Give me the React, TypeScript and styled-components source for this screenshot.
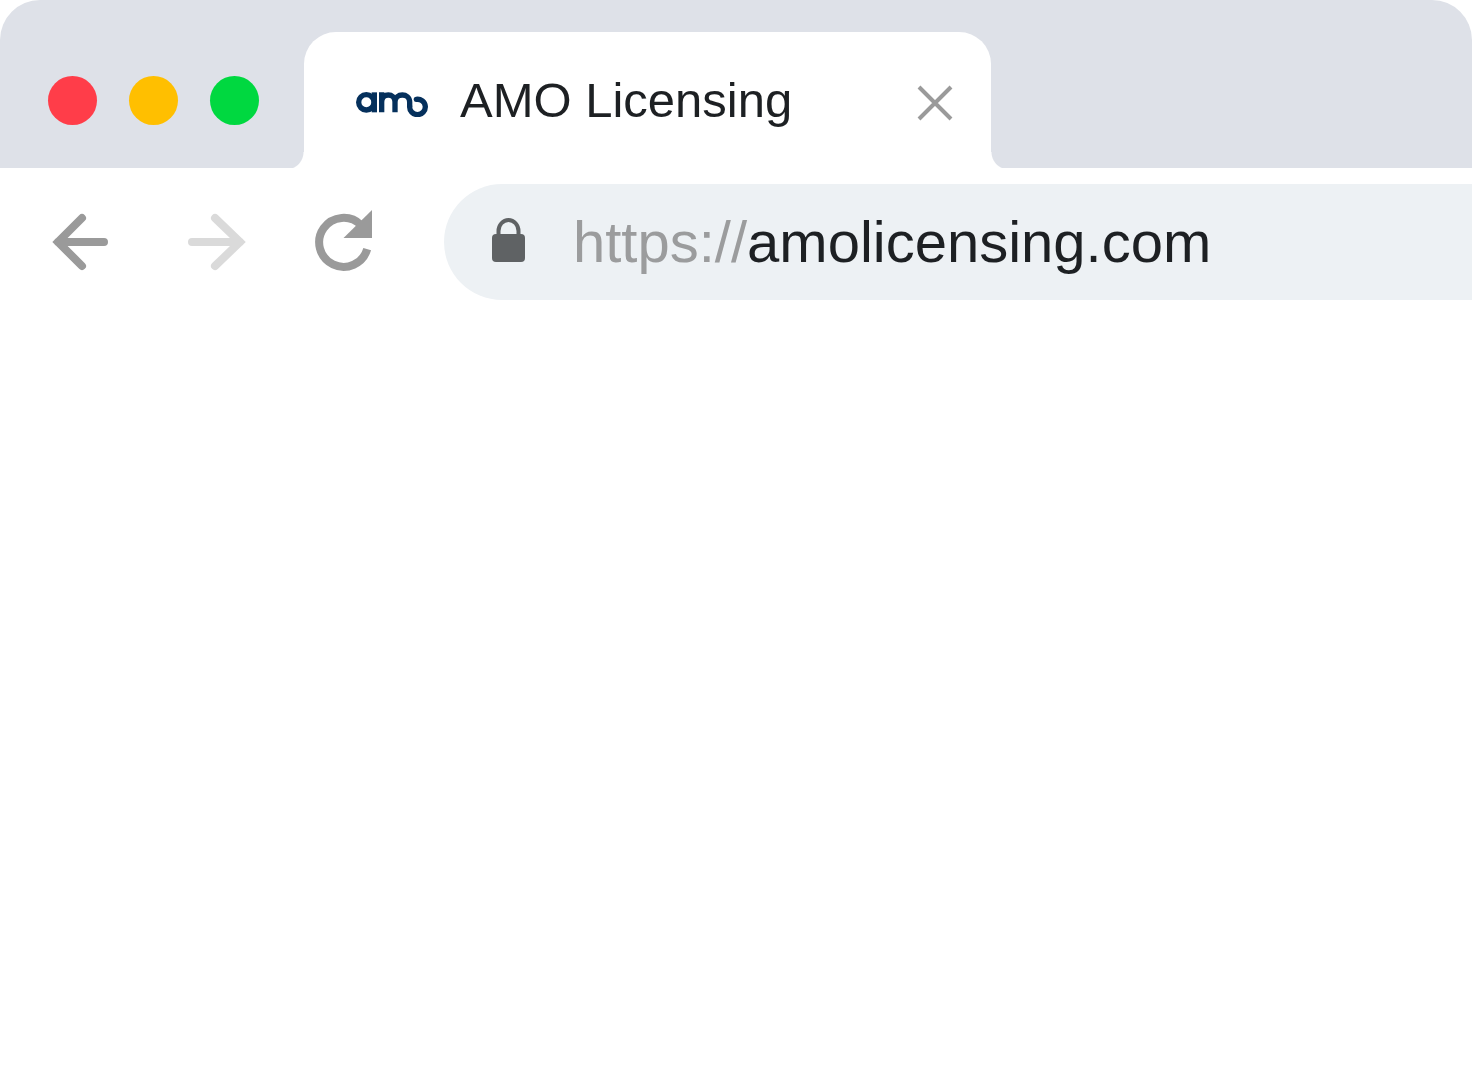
import React, { useState } from "react";
import styled, { createGlobalStyle } from "styled-components";

const colors = {
  strip: "#dee1e8",
  surface: "#ffffff",
  field: "#edf1f4",
  ink: "#1d2023",
  muted: "#9b9c9d",
  icon: "#9a9a9a",
  iconDisabled: "#dadada",
  lock: "#5f6264",
  brand: "#05305c",
};

const GlobalStyle = createGlobalStyle`
  *, *::before, *::after { box-sizing: border-box; }
  body {
    margin: 0;
    background: ${colors.surface};
    font-family: "Liberation Sans", Arial, sans-serif;
    color: ${colors.ink};
  }
`;

const BrowserWindow = styled.div`
  display: flex;
  flex-direction: column;
  min-height: 100vh;
  overflow: hidden;
  background: ${colors.surface};
`;

const TabStrip = styled.header`
  display: flex;
  align-items: flex-end;
  gap: 45px;
  padding: 32px 48px 0;
  background: ${colors.strip};
  border-radius: 40px 40px 0 0;
`;

const WindowControls = styled.div`
  display: flex;
  align-items: center;
  gap: 32px;
  height: 136px;
`;

const PlainButton = styled.button`
  display: flex;
  align-items: center;
  justify-content: center;
  flex: none;
  padding: 0;
  border: 0;
  background: none;
  cursor: pointer;

  &:disabled {
    cursor: default;
  }
`;

const WindowDot = styled(PlainButton)<{ $color: string }>`
  width: 49px;
  height: 49px;
  border-radius: 50%;
  background: ${({ $color }) => $color};
`;

const Tab = styled.div`
  position: relative;
  display: flex;
  align-items: center;
  gap: 32px;
  width: 687px;
  height: 136px;
  padding: 0 32px 0 52px;
  background: ${colors.surface};
  border-radius: 32px 32px 0 0;

  &::before,
  &::after {
    content: "";
    position: absolute;
    bottom: 0;
    width: 18px;
    height: 16px;
  }

  &::before {
    right: 100%;
    background: radial-gradient(circle at 0 0, transparent 17px, ${colors.surface} 18px);
  }

  &::after {
    left: 100%;
    background: radial-gradient(circle at 100% 0, transparent 17px, ${colors.surface} 18px);
  }
`;

const TabTitle = styled.span`
  flex: 1;
  font-size: 49px;
  line-height: 56px;
  white-space: nowrap;
`;

const CloseButton = styled(PlainButton)`
  width: 48px;
  height: 48px;
  margin-top: 6px;
`;

const Toolbar = styled.nav`
  display: flex;
  align-items: center;
  gap: 68px;
  padding: 16px 0 16px 48px;
`;

const ToolButton = styled(PlainButton)`
  width: 64px;
  height: 64px;

  svg {
    overflow: visible;
  }
`;

const AddressBar = styled.label`
  display: flex;
  align-items: center;
  flex: 1;
  min-width: 0;
  height: 116px;
  padding-left: 48px;
  background: ${colors.field};
  border-radius: 58px 0 0 58px;
  font-size: 58px;
  line-height: 68px;
`;

const Scheme = styled.span`
  padding-left: 48px;
  color: ${colors.muted};
`;

const AddressInput = styled.input`
  flex: 1;
  min-width: 0;
  height: 68px;
  padding: 0;
  border: 0;
  outline: 0;
  background: none;
  color: inherit;
  font: inherit;
`;

const Page = styled.main`
  flex: 1;
`;

const BrandLogo = () => (
  <svg width="72" height="33" viewBox="0 -24 216 99" fill="none" stroke={colors.brand} strokeWidth="16" aria-hidden="true">
    <circle cx="31" cy="31" r="23" />
    <path d="M55 1V61" />
    <path d="M77 61V1M77 30C77 2 117 2 117 30V61M117 30C117 2 161 2 161 30V44" />
    <path d="M161 43A23.500 23 0 1 0 181 22" strokeLinecap="round" />
  </svg>
);

const CloseIcon = () => (
  <svg width="36" height="36" viewBox="0 0 36 36" stroke={colors.icon} strokeWidth="4" aria-hidden="true">
    <path d="M2 2L34 34M34 2L2 34" />
  </svg>
);

const BackIcon = () => (
  <svg width="64" height="64" viewBox="0 0 64 64" fill="none" stroke={colors.icon} strokeWidth="8" strokeLinecap="round" aria-hidden="true">
    <path d="M56 32H10M34 8L10 32L34 56" />
  </svg>
);

const ForwardIcon = () => (
  <svg width="64" height="64" viewBox="0 0 64 64" fill="none" stroke={colors.iconDisabled} strokeWidth="8" strokeLinecap="round" aria-hidden="true">
    <path d="M12 32H60M35 8L60 32L35 56" />
  </svg>
);

const ReloadIcon = () => (
  <svg width="64" height="64" viewBox="0 0 64 64" fill="none" aria-hidden="true">
    <path d="M49 15A24.5 24.5 0 1 0 55.2 39.2" stroke={colors.icon} strokeWidth="8" />
    <path d="M60 0V28H31.5Z" fill={colors.icon} />
  </svg>
);

const LockIcon = () => (
  <svg width="33" height="48" viewBox="0 0 33 48" aria-hidden="true">
    <path d="M6.5 18V13A10 11 0 0 1 26.500 13V18" fill="none" stroke={colors.lock} strokeWidth="4" />
    <rect y="16" width="33" height="28" rx="4" fill={colors.lock} />
  </svg>
);

const windowButtons = [
  { label: "Close window", color: "#ff3d49" },
  { label: "Minimize window", color: "#ffbf00" },
  { label: "Maximize window", color: "#00d840" },
];

export default function App() {
  const [address, setAddress] = useState("amolicensing.com");

  return (
    <>
      <GlobalStyle />
      <BrowserWindow>
        <TabStrip>
          <WindowControls>
            {windowButtons.map(({ label, color }) => (
              <WindowDot key={label} type="button" aria-label={label} $color={color} />
            ))}
          </WindowControls>
          <Tab>
            <BrandLogo />
            <TabTitle>AMO Licensing</TabTitle>
            <CloseButton type="button" aria-label="Close tab">
              <CloseIcon />
            </CloseButton>
          </Tab>
        </TabStrip>
        <Toolbar aria-label="Navigation">
          <ToolButton type="button" aria-label="Back">
            <BackIcon />
          </ToolButton>
          <ToolButton type="button" aria-label="Forward" disabled>
            <ForwardIcon />
          </ToolButton>
          <ToolButton type="button" aria-label="Reload">
            <ReloadIcon />
          </ToolButton>
          <AddressBar>
            <LockIcon />
            <Scheme>https://</Scheme>
            <AddressInput
              type="text"
              aria-label="Address"
              spellCheck={false}
              value={address}
              onChange={(event) => setAddress(event.target.value)}
            />
          </AddressBar>
        </Toolbar>
        <Page />
      </BrowserWindow>
    </>
  );
}
